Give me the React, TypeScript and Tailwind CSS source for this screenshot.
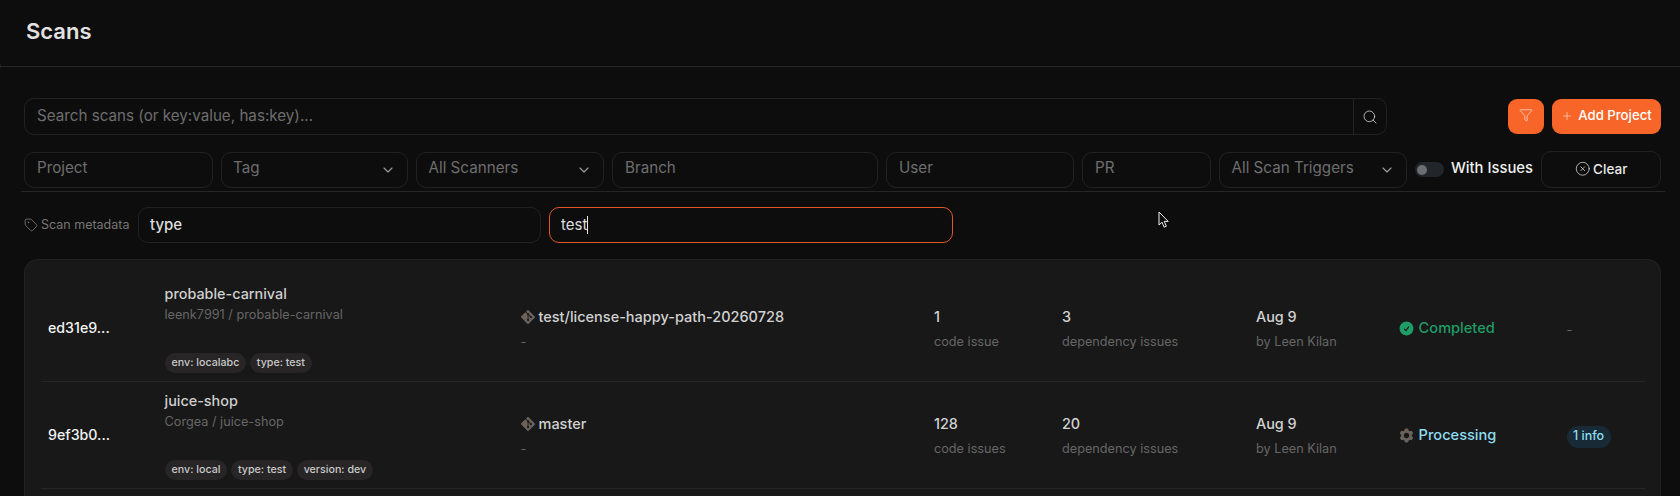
import { ChevronDown, CircleX, Funnel, Plus, Search, Tag } from 'lucide-react';
import { BsGit } from 'react-icons/bs';
import { HiCheckCircle, HiCog6Tooth } from 'react-icons/hi2';

const box = 'flex items-center rounded-[10px] border border-[#222222] pl-[12px] text-[15.2px] text-[#6e6e6e]';

function FilterInput({ label, width }: { label: string; width: string }) {
  return <div className={`${box} ${width} h-[36px] shrink-0 pb-[2px]`}>{label}</div>;
}

function FilterSelect({ label, width }: { label: string; width: string }) {
  return (
    <div className={`${box} ${width} h-[36px] shrink-0 justify-between pr-[11px]`}>
      <span className="-mt-[2px] -ml-[0.5px]">{label}</span>
      <ChevronDown size={16} strokeWidth={1.75} className="text-[#9a9a9a]" />
    </div>
  );
}

function Chip({ label }: { label: string }) {
  return (
    <span className="flex h-[20px] items-center rounded-full bg-[#272525] px-[7px] text-[10.7px] font-medium text-[#c9c9c9]">
      {label}
    </span>
  );
}

interface Scan {
  id: string;
  name: string;
  repo: string;
  chips: string[];
  branch: string;
  code: string;
  codeLabel: string;
  deps: string;
  status: 'completed' | 'processing';
  badge?: string;
}

const scans: Scan[] = [
  {
    id: 'ed31e9...',
    name: 'probable-carnival',
    repo: 'leenk7991 / probable-carnival',
    chips: ['env: localabc', 'type: test'],
    branch: 'test/license-happy-path-20260728',
    code: '1',
    codeLabel: 'code issue',
    deps: '3',
    status: 'completed',
  },
  {
    id: '9ef3b0...',
    name: 'juice-shop',
    repo: 'Corgea / juice-shop',
    chips: ['env: local', 'type: test', 'version: dev'],
    branch: 'master',
    code: '128',
    codeLabel: 'code issues',
    deps: '20',
    status: 'processing',
    badge: '1 info',
  },
];

function ScanRow({ scan }: { scan: Scan }) {
  return (
    <div className="grid h-[107px] grid-cols-[116.5px_356px_413.5px_128px_194px_143px_167.5px_1fr] items-center border-b border-[#262626] pl-[7px]">
      <div className="text-[14.2px] font-medium text-[#f2f2f2]">{scan.id}</div>
      <div className="flex h-full flex-col pt-[9px]">
        <div className="text-[14.4px] leading-[20px] font-[450] text-[#cfcfcf]">{scan.name}</div>
        <div className="text-[12.7px] leading-[21px] text-[#666666]">{scan.repo}</div>
        <div className="mt-auto mb-[8px] flex gap-[3.5px]">
          {scan.chips.map((c) => (
            <Chip key={c} label={c} />
          ))}
        </div>
      </div>
      <div className="pt-[2px]">
        <div className="flex h-[20px] items-center gap-[4px] text-[14.5px] font-medium text-[#d2d2d2]">
          <BsGit size={14} className="text-[#6b625c]" />
          {scan.branch}
        </div>
        <div className="mt-[5px] text-[12.7px] leading-[20px] text-[#666666]">-</div>
      </div>
      <div className="pt-[2px]">
        <div className="h-[20px] text-[14.4px] leading-[20px] font-medium text-[#d2d2d2]">{scan.code}</div>
        <div className="mt-[5px] text-[12.7px] leading-[20px] text-[#666666]">{scan.codeLabel}</div>
      </div>
      <div className="pt-[2px]">
        <div className="h-[20px] text-[14.4px] leading-[20px] font-medium text-[#d2d2d2]">{scan.deps}</div>
        <div className="mt-[5px] text-[12.7px] leading-[20px] text-[#666666]">dependency issues</div>
      </div>
      <div className="pt-[2px]">
        <div className="h-[20px] text-[14.4px] leading-[20px] font-medium text-[#d2d2d2]">Aug 9</div>
        <div className="mt-[5px] text-[12.7px] leading-[20px] text-[#666666]">by Leen Kilan</div>
      </div>
      <div className="pt-[2px]">
        {scan.status === 'completed' ? (
          <div className="flex items-center gap-[4px] text-[14.6px] font-medium text-[#1f9d66]">
            <HiCheckCircle size={17} className="-ml-[1.4px]" />
            Completed
          </div>
        ) : (
          <div className="flex items-center gap-[4px] text-[14.6px] font-medium text-[#8fdcf0]">
            <HiCog6Tooth size={17} className="-ml-[1.4px] text-[#6b625c]" />
            Processing
          </div>
        )}
      </div>
      <div>
        {scan.badge ? (
          <span className="inline-flex h-[22px] items-center rounded-full bg-[#172a35] px-[6.5px] text-[12.5px] font-medium text-[#8fdcf0]">
            {scan.badge}
          </span>
        ) : (
          <span className="text-[12.7px] text-[#666666]">-</span>
        )}
      </div>
    </div>
  );
}

export default function App() {
  return (
    <div className="relative flex h-[496px] flex-col overflow-hidden bg-[#0d0d0d] font-['Inter',sans-serif]">
      <header className="flex h-[67px] shrink-0 items-center border-b border-[#262626] pb-[3px] pl-[26px]">
        <h1 className="text-[22px] font-semibold text-[#e2e2e2]">Scans</h1>
      </header>
      <span className="absolute top-[62px] -left-[7px] size-[8px] rounded-full border border-[#262626] bg-[#0d0d0d]" />

      <main className="flex min-h-0 flex-1 flex-col pt-[31px] pr-[19px] pl-[24px]">
        <div className="flex items-center justify-between">
          <div className="flex h-[37px] w-[1363px] items-center justify-between rounded-[10px] border border-[#222222] pl-[12px] text-[15.2px] text-[#6e6e6e]">
            <span>Search scans (or key:value, has:key)...</span>
            <div className="flex h-full w-[33px] items-center justify-center border-l border-[#222222]">
              <Search size={16} strokeWidth={1.25} className="text-[#d0d0d0]" />
            </div>
          </div>
          <div className="flex gap-[8px]">
            <div className="flex h-[35px] w-[36px] items-center justify-center rounded-[9px] bg-[#f76628] pb-[3px]">
              <Funnel size={14} strokeWidth={1.25} className="text-[#ffe2d4]" />
            </div>
            <div className="flex h-[35px] w-[109px] items-center justify-center gap-[5px] rounded-[9px] bg-[#f76628] pb-[2px] text-[13.2px] font-medium text-white">
              <Plus size={12} strokeWidth={1.25} className="text-[#ffe2d4]" />
              Add Project
            </div>
          </div>
        </div>

        <div className="mt-[16px] flex items-center gap-[8px]">
          <FilterInput label="Project" width="w-[188.5px]" />
          <FilterSelect label="Tag" width="w-[187.5px]" />
          <FilterSelect label="All Scanners" width="w-[188px]" />
          <FilterInput label="Branch" width="w-[266px]" />
          <FilterInput label="User" width="w-[188px]" />
          <FilterInput label="PR" width="w-[129px]" />
          <FilterSelect label="All Scan Triggers" width="w-[188px]" />
          <div className="flex h-[15px] w-[29px] shrink-0 items-center rounded-full bg-[#22262a] pl-[2px]">
            <span className="size-[10px] rounded-full bg-[#6b6f73]" />
          </div>
          <span className="-mt-[2px] -ml-px w-[83px] shrink-0 text-[14.8px] font-[450] whitespace-nowrap text-[#f0f0f0]">With Issues</span>
          <div className="-ml-px flex h-[37px] w-[120px] shrink-0 items-center justify-center gap-[3px] rounded-[10px] border border-[#222222] pb-px text-[13.5px] font-[450] text-[#e8e8e8]">
            <CircleX size={15.5} strokeWidth={1.1} />
            Clear
          </div>
        </div>

        <div className="mt-[3px] -mr-[4px] -ml-[3px] border-t border-[#262626]" />

        <div className="mt-[15px] flex items-center">
          <Tag size={14} strokeWidth={1.25} className="mr-[3px] text-[#8a8a8a]" />
          <span className="w-[97px] text-[12.5px] whitespace-nowrap text-[#777777]">Scan metadata</span>
          <div className="flex h-[36px] w-[403px] items-center rounded-[10px] border border-[#222222] pl-[11px] text-[15px] font-medium text-[#dedede]">
            type
          </div>
          <div className="ml-[8px] flex h-[36px] w-[404px] items-center rounded-[10px] border border-[#e0582a] pl-[11px] text-[15px] text-[#dedede]">
            test
            <span className="h-[18px] w-px bg-[#e8e8e8]" />
          </div>
        </div>

        <div className="mt-[16px] min-h-0 flex-1 rounded-t-[14px] border border-b-0 border-[#222222] bg-[#181818] pt-[15px] pr-[15px] pl-[16px]">
          {scans.map((s) => (
            <ScanRow key={s.id} scan={s} />
          ))}
        </div>
      </main>

      <svg className="absolute top-[211px] left-[1158px]" width="11" height="18" viewBox="0 0 11 18">
        <path d="M1 1v13l3-2.8 2.2 5 2.2-1-2.2-4.8h4z" fill="#0d0d0d" stroke="#f0f0f0" strokeWidth="1" />
      </svg>
    </div>
  );
}
